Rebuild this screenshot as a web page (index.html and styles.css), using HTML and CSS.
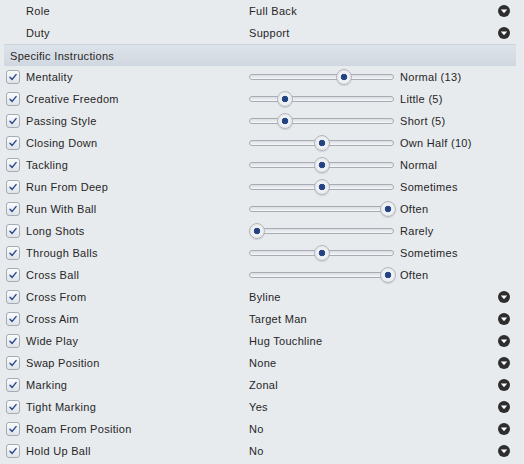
FILE: index.html
```html
<!DOCTYPE html>
<html>
<head>
<meta charset="utf-8">
<link rel="stylesheet" href="styles.css">
</head>
<body>
<div class="panel">
  <div class="row"><span class="nocheck"></span><span class="label">Role</span><span class="value">Full Back</span><span class="dd"><svg viewBox="0 0 12 12"><circle cx="6" cy="6" r="6"/><path d="M2.8 4.6 H9.2 L6 8.2 Z"/></svg></span></div>
  <div class="row"><span class="nocheck"></span><span class="label">Duty</span><span class="value">Support</span><span class="dd"><svg viewBox="0 0 12 12"><circle cx="6" cy="6" r="6"/><path d="M2.8 4.6 H9.2 L6 8.2 Z"/></svg></span></div>
  <div class="section">Specific Instructions</div>

  <div class="row"><span class="cb"><svg viewBox="0 0 14 14"><path d="M3.5 7.2 L6 9.8 L10.6 4.2"/></svg></span><span class="label">Mentality</span><span class="slider"><span class="track"></span><span class="knob" style="left:87px"></span></span><span class="sval">Normal (13)</span></div>
  <div class="row"><span class="cb"><svg viewBox="0 0 14 14"><path d="M3.5 7.2 L6 9.8 L10.6 4.2"/></svg></span><span class="label">Creative Freedom</span><span class="slider"><span class="track"></span><span class="knob" style="left:28px"></span></span><span class="sval">Little (5)</span></div>
  <div class="row"><span class="cb"><svg viewBox="0 0 14 14"><path d="M3.5 7.2 L6 9.8 L10.6 4.2"/></svg></span><span class="label">Passing Style</span><span class="slider"><span class="track"></span><span class="knob" style="left:28px"></span></span><span class="sval">Short (5)</span></div>
  <div class="row"><span class="cb"><svg viewBox="0 0 14 14"><path d="M3.5 7.2 L6 9.8 L10.6 4.2"/></svg></span><span class="label">Closing Down</span><span class="slider"><span class="track"></span><span class="knob" style="left:65px"></span></span><span class="sval">Own Half (10)</span></div>
  <div class="row"><span class="cb"><svg viewBox="0 0 14 14"><path d="M3.5 7.2 L6 9.8 L10.6 4.2"/></svg></span><span class="label">Tackling</span><span class="slider"><span class="track"></span><span class="knob" style="left:65px"></span></span><span class="sval">Normal</span></div>
  <div class="row"><span class="cb"><svg viewBox="0 0 14 14"><path d="M3.5 7.2 L6 9.8 L10.6 4.2"/></svg></span><span class="label">Run From Deep</span><span class="slider"><span class="track"></span><span class="knob" style="left:65px"></span></span><span class="sval">Sometimes</span></div>
  <div class="row"><span class="cb"><svg viewBox="0 0 14 14"><path d="M3.5 7.2 L6 9.8 L10.6 4.2"/></svg></span><span class="label">Run With Ball</span><span class="slider"><span class="track"></span><span class="knob" style="left:131px"></span></span><span class="sval">Often</span></div>
  <div class="row"><span class="cb"><svg viewBox="0 0 14 14"><path d="M3.5 7.2 L6 9.8 L10.6 4.2"/></svg></span><span class="label">Long Shots</span><span class="slider"><span class="track"></span><span class="knob" style="left:0px"></span></span><span class="sval">Rarely</span></div>
  <div class="row"><span class="cb"><svg viewBox="0 0 14 14"><path d="M3.5 7.2 L6 9.8 L10.6 4.2"/></svg></span><span class="label">Through Balls</span><span class="slider"><span class="track"></span><span class="knob" style="left:65px"></span></span><span class="sval">Sometimes</span></div>
  <div class="row"><span class="cb"><svg viewBox="0 0 14 14"><path d="M3.5 7.2 L6 9.8 L10.6 4.2"/></svg></span><span class="label">Cross Ball</span><span class="slider"><span class="track"></span><span class="knob" style="left:131px"></span></span><span class="sval">Often</span></div>

  <div class="row"><span class="cb"><svg viewBox="0 0 14 14"><path d="M3.5 7.2 L6 9.8 L10.6 4.2"/></svg></span><span class="label">Cross From</span><span class="value">Byline</span><span class="dd"><svg viewBox="0 0 12 12"><circle cx="6" cy="6" r="6"/><path d="M2.8 4.6 H9.2 L6 8.2 Z"/></svg></span></div>
  <div class="row"><span class="cb"><svg viewBox="0 0 14 14"><path d="M3.5 7.2 L6 9.8 L10.6 4.2"/></svg></span><span class="label">Cross Aim</span><span class="value">Target Man</span><span class="dd"><svg viewBox="0 0 12 12"><circle cx="6" cy="6" r="6"/><path d="M2.8 4.6 H9.2 L6 8.2 Z"/></svg></span></div>
  <div class="row"><span class="cb"><svg viewBox="0 0 14 14"><path d="M3.5 7.2 L6 9.8 L10.6 4.2"/></svg></span><span class="label">Wide Play</span><span class="value">Hug Touchline</span><span class="dd"><svg viewBox="0 0 12 12"><circle cx="6" cy="6" r="6"/><path d="M2.8 4.6 H9.2 L6 8.2 Z"/></svg></span></div>
  <div class="row"><span class="cb"><svg viewBox="0 0 14 14"><path d="M3.5 7.2 L6 9.8 L10.6 4.2"/></svg></span><span class="label">Swap Position</span><span class="value">None</span><span class="dd"><svg viewBox="0 0 12 12"><circle cx="6" cy="6" r="6"/><path d="M2.8 4.6 H9.2 L6 8.2 Z"/></svg></span></div>
  <div class="row"><span class="cb"><svg viewBox="0 0 14 14"><path d="M3.5 7.2 L6 9.8 L10.6 4.2"/></svg></span><span class="label">Marking</span><span class="value">Zonal</span><span class="dd"><svg viewBox="0 0 12 12"><circle cx="6" cy="6" r="6"/><path d="M2.8 4.6 H9.2 L6 8.2 Z"/></svg></span></div>
  <div class="row"><span class="cb"><svg viewBox="0 0 14 14"><path d="M3.5 7.2 L6 9.8 L10.6 4.2"/></svg></span><span class="label">Tight Marking</span><span class="value">Yes</span><span class="dd"><svg viewBox="0 0 12 12"><circle cx="6" cy="6" r="6"/><path d="M2.8 4.6 H9.2 L6 8.2 Z"/></svg></span></div>
  <div class="row"><span class="cb"><svg viewBox="0 0 14 14"><path d="M3.5 7.2 L6 9.8 L10.6 4.2"/></svg></span><span class="label">Roam From Position</span><span class="value">No</span><span class="dd"><svg viewBox="0 0 12 12"><circle cx="6" cy="6" r="6"/><path d="M2.8 4.6 H9.2 L6 8.2 Z"/></svg></span></div>
  <div class="row"><span class="cb"><svg viewBox="0 0 14 14"><path d="M3.5 7.2 L6 9.8 L10.6 4.2"/></svg></span><span class="label">Hold Up Ball</span><span class="value">No</span><span class="dd"><svg viewBox="0 0 12 12"><circle cx="6" cy="6" r="6"/><path d="M2.8 4.6 H9.2 L6 8.2 Z"/></svg></span></div>
</div>
</body>
</html>
```
FILE: styles.css
```css
html, body {
  margin: 0;
  padding: 0;
  background: #e8ebee;
}
body {
  width: 524px;
  height: 464px;
  overflow: hidden;
  font-family: "Liberation Sans", Arial, sans-serif;
  font-size: 11px;
  letter-spacing: 0.3px;
  color: #262626;
}
.panel {
  display: flex;
  flex-direction: column;
}
.row {
  display: grid;
  grid-template-columns: 26px 223px 145px 1fr;
  align-items: center;
  height: 22px;
}
.row .value {
  grid-column: 3 / 4;
  white-space: nowrap;
}
.row .dd {
  grid-column: 4;
  justify-self: end;
  margin-right: 14px;
  width: 12px;
  height: 12px;
  display: flex;
}
.dd svg {
  width: 12px;
  height: 12px;
}
.dd circle { fill: #2e2e2e; }
.dd path { fill: #ffffff; }
.label {
  white-space: nowrap;
}
.nocheck {
  display: block;
}
.cb {
  margin-left: 6px;
  width: 12px;
  height: 12px;
  border: 1px solid #a3abb4;
  border-radius: 3px;
  background: linear-gradient(#fbfcfd, #dfe3e8);
  display: flex;
}
.cb svg {
  width: 12px;
  height: 12px;
}
.cb path {
  fill: none;
  stroke: #274a8c;
  stroke-width: 1.7;
  stroke-linecap: round;
  stroke-linejoin: round;
}
.section {
  margin: 0 8px 0 4px;
  height: 21px;
  line-height: 22px;
  padding-left: 6px;
  border-top: 1px solid #cbd3dd;
  background: linear-gradient(#dde3ea, #d0d7e0);
  color: #262626;
}
.slider {
  position: relative;
  width: 145px;
  height: 16px;
  display: flex;
  align-items: center;
}
.track {
  display: block;
  width: 145px;
  height: 6px;
  border: 1px solid #a8adb3;
  border-radius: 3px;
  box-sizing: border-box;
  background: linear-gradient(#d9dde2, #f6f7f8);
}
.knob {
  position: absolute;
  top: 0;
  width: 14px;
  height: 14px;
  border-radius: 50%;
  border: 1px solid #b3b8be;
  background: radial-gradient(circle at 50% 50%, #1f3d7a 0, #2a4a88 3px, #f3f4f6 3.6px, #e6e8eb 7px);
  box-shadow: 0 1px 1px rgba(0,0,0,0.12);
}
.sval {
  padding-left: 6px;
  white-space: nowrap;
}
```
